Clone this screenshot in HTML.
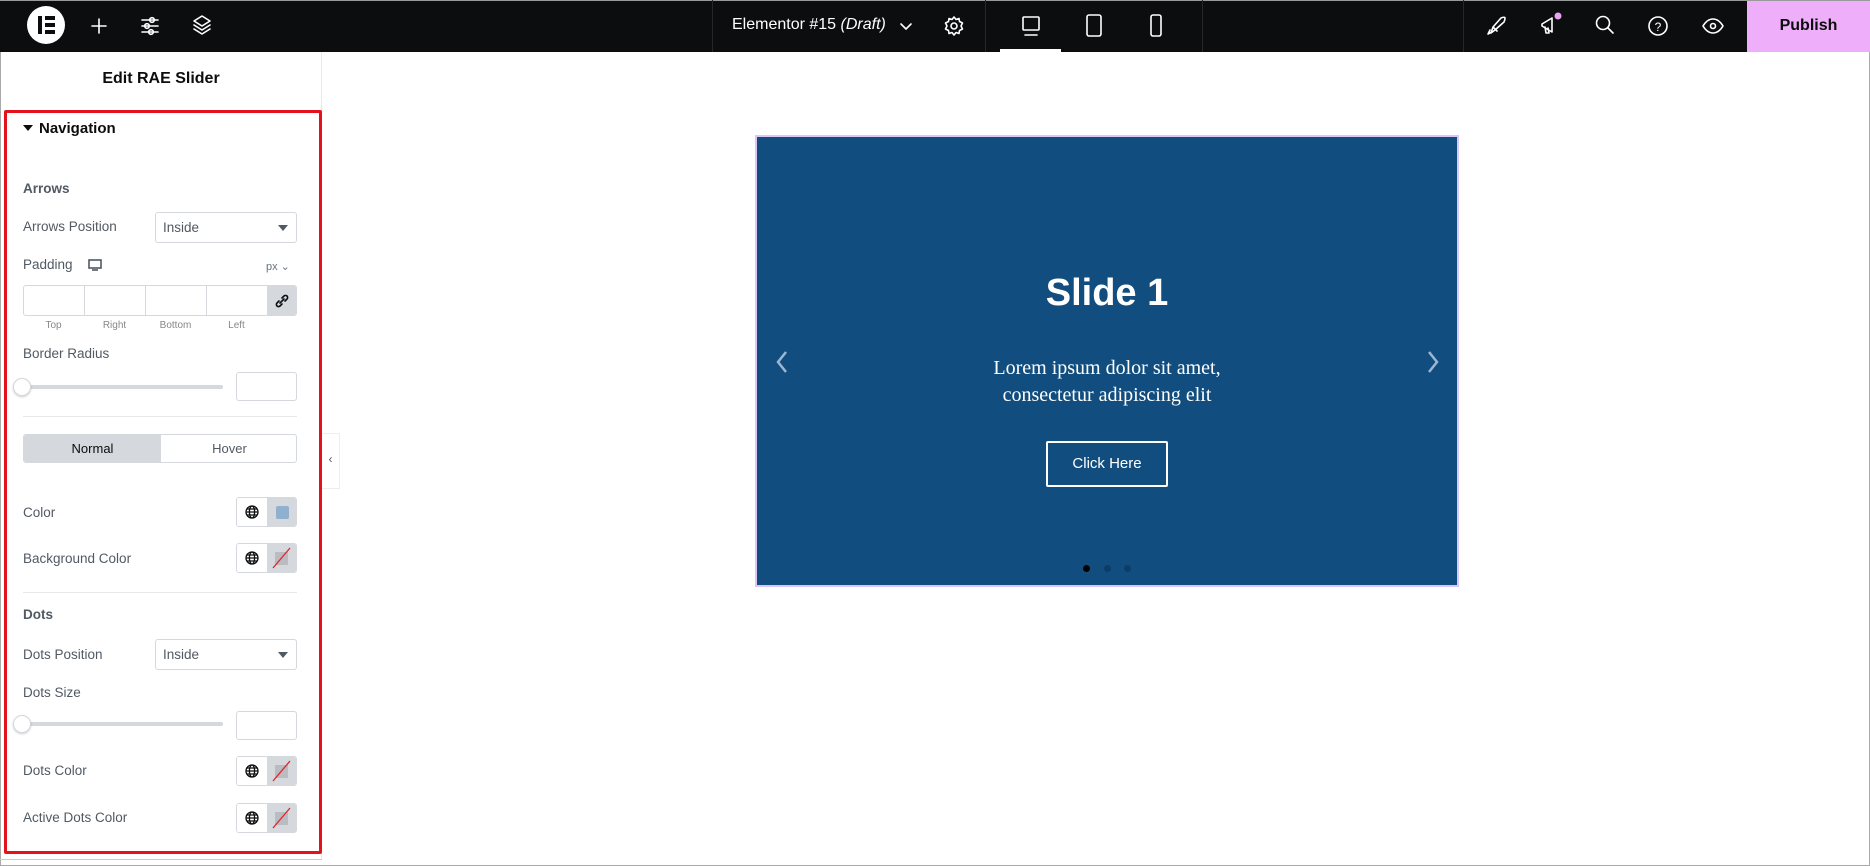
<!DOCTYPE html>
<html><head><meta charset="utf-8"><style>
*{box-sizing:border-box;margin:0;padding:0}
body{width:1870px;height:866px;overflow:hidden;background:#fff;font-family:"Liberation Sans",Arial,sans-serif;position:relative;color:#515962}
.a{position:absolute}
.hdr{left:0;top:0;width:1870px;height:52px;background:#0c0d0e;border-top:1px solid #999}
.sep{top:0;width:1px;height:52px;background:#25282b}
.ic{stroke:#fff;fill:none;stroke-width:1.6;stroke-linecap:round;stroke-linejoin:round}
.lbl{font-size:13.5px;color:#515962;left:23px}
.sel{left:155px;width:142px;height:31px;border:1px solid #d5d8dc;border-radius:3px;font-size:13.5px;padding:7px 7px;color:#515962}
.sel:after{content:"";position:absolute;right:8px;top:12px;border:5px solid transparent;border-top:6px solid #515962;border-bottom:0}
.ctl{left:236px;width:61px;height:30px;border:1px solid #d5d8dc;border-radius:3px;overflow:hidden}
.ctl .g{position:absolute;left:0;top:0;width:30px;height:28px;background:#fff}
.ctl .s{position:absolute;left:30px;top:0;width:31px;height:28px;background:#d5d8dc}
.trk{left:23px;width:200px;height:4px;background:#d5d8dc;border-radius:2px}
.th{width:18px;height:18px;border-radius:50%;background:#fff;border:1px solid #d5d8dc;box-shadow:0 1px 2px rgba(0,0,0,.2)}
.box{left:236px;width:61px;height:29px;border:1px solid #d5d8dc;border-radius:3px}
</style></head><body>
<div class="a" style="left:0;top:0;width:1870px;height:866px;border:1px solid #aaa"></div>
<div class="a hdr"></div>
<!-- logo -->
<div class="a" style="left:27px;top:6px;width:38px;height:38px;border-radius:50%;background:#fff"></div>
<div class="a" style="left:38px;top:16px;width:4px;height:18px;background:#0c0d0e"></div>
<div class="a" style="left:45px;top:16px;width:10px;height:4px;background:#0c0d0e"></div>
<div class="a" style="left:45px;top:23px;width:10px;height:4px;background:#0c0d0e"></div>
<div class="a" style="left:45px;top:30px;width:10px;height:4px;background:#0c0d0e"></div>
<svg class="a" style="left:89px;top:16px" width="20" height="20"><path class="ic" d="M10 3v14M3 10h14"/></svg>
<svg class="a" style="left:140px;top:15px" width="20" height="22"><path class="ic" d="M2 5h16M2 11h16M2 17h16"/><circle cx="12" cy="5" r="2.3" fill="#0c0d0e" class="ic"/><circle cx="7" cy="11" r="2.3" fill="#0c0d0e" class="ic"/><circle cx="11" cy="17" r="2.3" fill="#0c0d0e" class="ic"/></svg>
<svg class="a" style="left:192px;top:14px" width="20" height="24"><path class="ic" d="M10 2l8 5-8 5-8-5z M2 11l8 5 8-5 M2 15l8 5 8-5"/></svg>
<div class="a sep" style="left:712px"></div><div class="a sep" style="left:985px"></div><div class="a sep" style="left:1202px"></div><div class="a sep" style="left:1463px"></div>
<div class="a" style="left:732px;top:16px;color:#fff;font-size:16px">Elementor #15 <i>(Draft)</i></div>
<svg class="a" style="left:899px;top:19px" width="14" height="14"><path class="ic" d="M2 5l5 5 5-5"/></svg>
<svg class="a" style="left:943px;top:15px" width="22" height="22"><circle cx="11" cy="11" r="3" class="ic"/><path class="ic" d="M11 2l2 2.5 3-1 .5 3 3 1.5-1.5 3 1.5 3-3 1.5-.5 3-3-1-2 2.5-2-2.5-3 1-.5-3-3-1.5 1.5-3-1.5-3 3-1.5.5-3 3 1z"/></svg>
<svg class="a" style="left:1020px;top:14px" width="22" height="24"><rect x="3" y="3" width="16" height="13" rx="1" class="ic"/><path class="ic" d="M5 21h12"/></svg>
<div class="a" style="left:1000px;top:49px;width:61px;height:3px;background:#fff"></div>
<svg class="a" style="left:1084px;top:13px" width="20" height="26"><rect x="3" y="2" width="14" height="21" rx="2" class="ic" stroke="#bbb"/></svg>
<svg class="a" style="left:1148px;top:13px" width="16" height="26"><rect x="3" y="2" width="10" height="21" rx="2" class="ic" stroke="#bbb"/></svg>
<svg class="a" style="left:1486px;top:14px" width="22" height="24"><path class="ic" d="M5 19l2-6 8-9c2-1 4-1 4 0s0 2-1 4l-9 8-4 3zM7 13l4 4M4 16l-2 4 4-2"/></svg>
<svg class="a" style="left:1538px;top:12px" width="26" height="26"><path class="ic" d="M4 12l10-6v14L4 14zM7 15l1 6h3l-1-5"/><circle cx="20" cy="4" r="3.5" fill="#e9a3f3"/></svg>
<svg class="a" style="left:1594px;top:14px" width="22" height="22"><circle cx="9" cy="9" r="6.5" class="ic"/><path class="ic" d="M14 14l5 5"/></svg>
<svg class="a" style="left:1647px;top:14px" width="22" height="24"><circle cx="11" cy="12" r="9" class="ic"/><text x="11" y="17" fill="#fff" font-size="12" text-anchor="middle" font-family="Liberation Sans">?</text></svg>
<svg class="a" style="left:1701px;top:15px" width="24" height="22"><path class="ic" d="M2 11c3-5 6-7 10-7s7 2 10 7c-3 5-6 7-10 7s-7-2-10-7z"/><circle cx="12" cy="11" r="2.5" class="ic"/></svg>
<div class="a" style="left:1747px;top:1px;width:123px;height:51px;background:#eeaef9;color:#0c0d0e;font-size:16px;font-weight:bold;text-align:center;line-height:49px">Publish</div>

<!-- panel -->
<div class="a" style="left:321px;top:52px;width:1px;height:808px;background:#e6e8ea"></div>
<div class="a" style="left:0;top:52px;width:322px;height:808px;border-bottom:1px solid #ccc"></div>
<div class="a" style="left:0;top:70px;width:322px;text-align:center;font-size:16px;font-weight:bold;color:#0c0d0e">Edit RAE Slider</div>
<div class="a" style="left:4px;top:110px;width:318px;height:744px;border:3px solid #e4121b;border-radius:2px"></div>
<div class="a" style="left:23px;top:125px;border:5px solid transparent;border-top:6px solid #0c0d0e"></div>
<div class="a" style="left:39px;top:120px;font-size:15px;font-weight:bold;color:#0c0d0e">Navigation</div>
<div class="a lbl" style="top:181px;font-weight:bold">Arrows</div>
<div class="a lbl" style="top:219px">Arrows Position</div>
<div class="a sel" style="top:212px">Inside</div>
<div class="a lbl" style="top:257px">Padding</div>
<svg class="a" style="left:88px;top:259px" width="14" height="13"><rect x="1" y="1" width="12" height="8" fill="none" stroke="#515962" stroke-width="1.6"/><path d="M4 11h6" stroke="#515962" stroke-width="1.6"/></svg>
<div class="a" style="left:266px;top:260px;font-size:11px;color:#69727d">px ⌄</div>
<div class="a" style="left:23px;top:285px;width:274px;height:31px;border:1px solid #d5d8dc;border-radius:3px;overflow:hidden">
<div class="a" style="left:60px;top:0;width:1px;height:30px;background:#d5d8dc"></div>
<div class="a" style="left:121px;top:0;width:1px;height:30px;background:#d5d8dc"></div>
<div class="a" style="left:182px;top:0;width:1px;height:30px;background:#d5d8dc"></div>
<div class="a" style="left:243px;top:0;width:31px;height:30px;background:#d5d8dc"></div>
<svg class="a" style="left:250px;top:7px" width="16" height="16"><path d="M6 10l4-4M5 8l-2 2a2 2 0 003 3l2-2M11 8l2-2a2 2 0 00-3-3L8 5" fill="none" stroke="#0c0d0e" stroke-width="1.6" stroke-linecap="round"/></svg></div>
<div class="a" style="top:320px;left:23px;width:244px;font-size:10px;color:#888;display:flex"><span style="width:61px;text-align:center">Top</span><span style="width:61px;text-align:center">Right</span><span style="width:61px;text-align:center">Bottom</span><span style="width:61px;text-align:center">Left</span></div>
<div class="a lbl" style="top:346px">Border Radius</div>
<div class="a trk" style="top:385px"></div>
<div class="a th" style="left:13px;top:378px"></div>
<div class="a box" style="top:372px"></div>
<div class="a" style="left:23px;top:416px;width:274px;height:1px;background:#e6e8ea"></div>
<div class="a" style="left:23px;top:434px;width:274px;height:29px;border:1px solid #d5d8dc;border-radius:3px;overflow:hidden;font-size:13px">
<div class="a" style="left:0;top:0;width:137px;height:27px;background:#d5d8dc;color:#0c0d0e;text-align:center;line-height:27px">Normal</div>
<div class="a" style="left:137px;top:0;width:137px;height:27px;text-align:center;line-height:27px;color:#515962">Hover</div></div>
<div class="a" style="left:322px;top:433px;width:18px;height:56px;border:1px solid #eee;border-left:0;background:#fff;font-size:12px;color:#515962;text-align:center;line-height:50px">‹</div>

<div class="a lbl" style="top:505px">Color</div>
<div class="a lbl" style="top:551px">Background Color</div>
<div class="a lbl" style="top:607px;font-weight:bold">Dots</div>
<div class="a lbl" style="top:647px">Dots Position</div>
<div class="a sel" style="top:639px">Inside</div>
<div class="a lbl" style="top:685px">Dots Size</div>
<div class="a trk" style="top:722px"></div>
<div class="a th" style="left:13px;top:715px"></div>
<div class="a box" style="top:711px"></div>
<div class="a lbl" style="top:763px">Dots Color</div>
<div class="a lbl" style="top:810px">Active Dots Color</div>
<div class="a" style="left:23px;top:592px;width:274px;height:1px;background:#e6e8ea"></div>

<div class="a ctl" style="top:497px"><div class="g"></div><div class="s"><div class="a" style="left:9px;top:8px;width:13px;height:13px;border-radius:2px;background:#8fb0cf"></div></div></div>
<div class="a ctl" style="top:543px"><div class="g"></div><div class="s"></div></div>
<div class="a ctl" style="top:756px"><div class="g"></div><div class="s"></div></div>
<div class="a ctl" style="top:803px"><div class="g"></div><div class="s"></div></div>
<svg class="a" style="left:0;top:0" width="330" height="866">
<g fill="none" stroke="#0c0d0e" stroke-width="1.3">
<g transform="translate(252,512)"><circle r="6"/><ellipse rx="2.6" ry="6"/><path d="M-6 0h12M-5 -3h10M-5 3h10"/></g>
<g transform="translate(252,558)"><circle r="6"/><ellipse rx="2.6" ry="6"/><path d="M-6 0h12M-5 -3h10M-5 3h10"/></g>
<g transform="translate(252,771)"><circle r="6"/><ellipse rx="2.6" ry="6"/><path d="M-6 0h12M-5 -3h10M-5 3h10"/></g>
<g transform="translate(252,818)"><circle r="6"/><ellipse rx="2.6" ry="6"/><path d="M-6 0h12M-5 -3h10M-5 3h10"/></g>
</g>
<g fill="#b9bcc0"><rect x="275" y="552" width="13" height="13"/><rect x="275" y="765" width="13" height="13"/><rect x="275" y="812" width="13" height="13"/></g>
<g stroke="#e4222a" stroke-width="1.3"><path d="M273 568l17-20M273 781l17-20M273 828l17-20"/></g>
</svg>

<!-- slider -->
<div class="a" style="left:755px;top:135px;width:704px;height:452px;background:#114e7f;border:2px solid #dcc6f5"></div>
<div class="a" style="left:755px;top:272px;width:704px;text-align:center;color:#fff;font-size:38px;font-weight:bold">Slide 1</div>
<div class="a" style="left:755px;top:355px;width:704px;text-align:center;color:#fff;font-size:20px;line-height:27px;font-family:'Liberation Serif',serif">Lorem ipsum dolor sit amet,<br>consectetur adipiscing elit</div>
<div class="a" style="left:1046px;top:441px;width:122px;height:46px;border:2px solid #fff;border-radius:2px;color:#fff;font-size:15px;text-align:center;line-height:42px">Click Here</div>
<svg class="a" style="left:773px;top:349px" width="18" height="26"><path d="M13 3l-8 10 8 10" fill="none" stroke="#9db7d2" stroke-width="2.5"/></svg>
<svg class="a" style="left:1424px;top:349px" width="18" height="26"><path d="M5 3l8 10-8 10" fill="none" stroke="#9db7d2" stroke-width="2.5"/></svg>
<div class="a" style="left:1083px;top:565px;width:7px;height:7px;border-radius:50%;background:#000"></div>
<div class="a" style="left:1104px;top:565px;width:7px;height:7px;border-radius:50%;background:#0d3d66"></div>
<div class="a" style="left:1124px;top:565px;width:7px;height:7px;border-radius:50%;background:#0d3d66"></div>
</body></html>
